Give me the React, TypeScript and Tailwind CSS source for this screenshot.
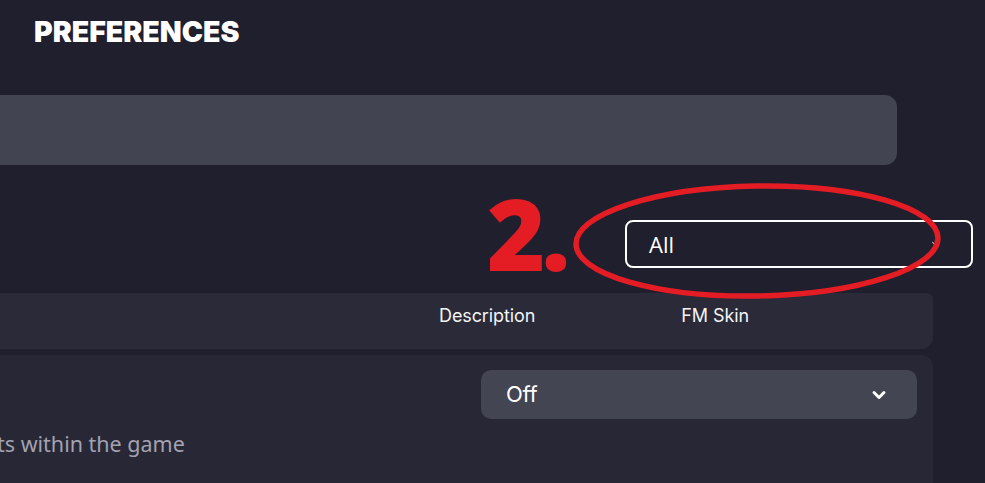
import React from 'react';
import { ChevronDown } from 'lucide-react';

export default function App() {
  return (
    <div className="relative h-[483px] w-[985px] overflow-hidden bg-[#1f1f2e] font-['Open_Sans',sans-serif] text-white">
      {/* title */}
      <div className="pl-[34px] pt-[14px]">
        <h1 className="font-['Inter',sans-serif] text-[28.5px] font-black leading-[36px] tracking-[0px]">PREFERENCES</h1>
      </div>

      {/* search bar */}
      <div className="mt-[45px] h-[70px] w-[897px] rounded-r-xl bg-[#434451]" />

      {/* filter row */}
      <div className="mt-[55px] flex w-[973px] justify-end">
        <div className="flex h-[48px] w-[348px] items-center justify-between rounded-lg border-2 border-white bg-[#1f1f2e] pl-[22px] pr-[28px]">
          <span className="text-[22px] leading-none">All</span>
          <ChevronDown size={14} strokeWidth={2} className="text-gray-400" />
        </div>
      </div>

      {/* table header */}
      <div className="mt-[25px] flex h-[56px] w-[933px] items-start rounded-br-xl rounded-tr-md bg-[#2a2a39] pt-[9px] font-['Inter',sans-serif] text-[18px] tracking-[-0.1px] text-gray-100">
        <span className="ml-[439px]">Description</span>
        <span className="ml-[146px]">FM Skin</span>
      </div>

      {/* row */}
      <div className="mt-[6px] h-[140px] w-[933px] rounded-tr-xl bg-[#272735] pt-[15px]">
        <div className="flex justify-end pr-[16px]">
          <div className="flex h-[49px] w-[436px] items-center justify-between rounded-[10px] bg-[#444553] pl-[25px] pr-[28px]">
            <span className="font-['Inter',sans-serif] text-[22px] tracking-[-0.3px]">Off</span>
            <ChevronDown size={20} strokeWidth={3.5} className="text-white" />
          </div>
        </div>
        <p className="-ml-[3px] mt-[9px] font-['Noto_Sans',sans-serif] text-[21.5px] text-[#a2a2b2]">ts within the game</p>
      </div>

      {/* annotation */}
      <span className="absolute left-[487px] top-[182px] font-['Open_Sans',sans-serif] text-[100px] font-extrabold leading-none tracking-[-4px] text-[#e41c24]">2.</span>
      <svg className="absolute left-[570px] top-[180px]" width="374" height="122" viewBox="0 0 374 122">
        <ellipse cx="187" cy="61" rx="181" ry="55" fill="none" stroke="#e41c24" strokeWidth="5.5" transform="rotate(-1 187 61)" />
      </svg>
    </div>
  );
}
